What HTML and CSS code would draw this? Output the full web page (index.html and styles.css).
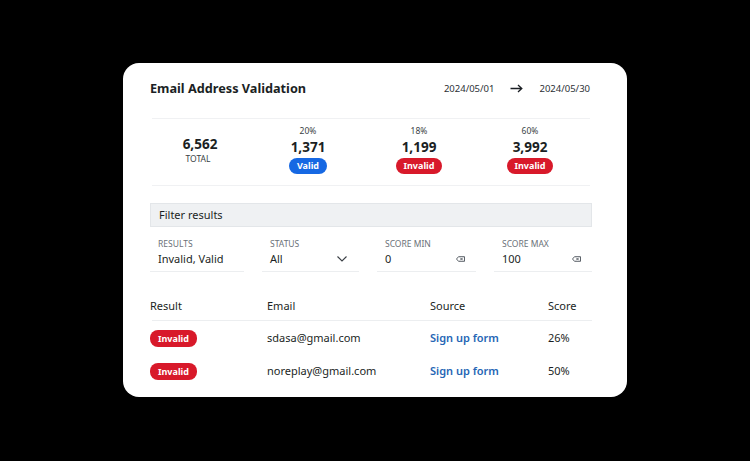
FILE: index.html
```html
<!DOCTYPE html>
<html lang="en">
<head>
  <meta charset="UTF-8">
  <meta name="viewport" content="width=device-width, initial-scale=1.0">
  <title>Email Address Validation</title>
  <link rel="stylesheet" href="styles.css">
</head>
<body>
  <div class="card">
    <header>
      <h1>Email Address Validation</h1>
      <div class="date-range">
        <span>2024/05/01</span>
        <svg class="arrow" width="13" height="9" viewBox="0 0 13 9"><path d="M0.5 4.5h11M8 1l3.8 3.5L8 8" fill="none" stroke="#1b1f24" stroke-width="1.3"/></svg>
        <span>2024/05/30</span>
      </div>
    </header>

    <div class="stats">
      <div class="stat total">
        <div class="stat-value">6,562</div>
        <div class="stat-label">TOTAL</div>
      </div>
      <div class="stat">
        <div class="stat-pct">20%</div>
        <div class="stat-value">1,371</div>
        <span class="badge valid">Valid</span>
      </div>
      <div class="stat">
        <div class="stat-pct">18%</div>
        <div class="stat-value">1,199</div>
        <span class="badge invalid">Invalid</span>
      </div>
      <div class="stat">
        <div class="stat-pct">60%</div>
        <div class="stat-value">3,992</div>
        <span class="badge invalid">Invalid</span>
      </div>
    </div>

    <div class="filter-bar">Filter results</div>
    <div class="filters">
      <div class="field">
        <label>RESULTS</label>
        <div class="field-value">Invalid, Valid</div>
      </div>
      <div class="field">
        <label>STATUS</label>
        <div class="field-value">All
          <svg class="chevron" width="10" height="6" viewBox="0 0 10 6"><path d="M0.5 0.5L5 5l4.5-4.5" fill="none" stroke="#3a3f45" stroke-width="1.1"/></svg>
        </div>
      </div>
      <div class="field">
        <label>SCORE MIN</label>
        <div class="field-value">0
          <svg class="clear" width="9" height="6" viewBox="0 0 9 6"><path d="M0.5 3L2.5 0.7h6v4.6h-6z" fill="none" stroke="#4a5058" stroke-width="0.9"/><path d="M4.3 1.8l2.4 2.4M6.7 1.8L4.3 4.2" stroke="#4a5058" stroke-width="0.9"/></svg>
        </div>
      </div>
      <div class="field">
        <label>SCORE MAX</label>
        <div class="field-value">100
          <svg class="clear" width="9" height="6" viewBox="0 0 9 6"><path d="M0.5 3L2.5 0.7h6v4.6h-6z" fill="none" stroke="#4a5058" stroke-width="0.9"/><path d="M4.3 1.8l2.4 2.4M6.7 1.8L4.3 4.2" stroke="#4a5058" stroke-width="0.9"/></svg>
        </div>
      </div>
    </div>

    <div class="results">
      <div class="row head">
        <div>Result</div>
        <div>Email</div>
        <div>Source</div>
        <div>Score</div>
      </div>
      <div class="row">
        <div><span class="badge invalid">Invalid</span></div>
        <div>sdasa@gmail.com</div>
        <div><a href="#">Sign up form</a></div>
        <div>26%</div>
      </div>
      <div class="row">
        <div><span class="badge invalid">Invalid</span></div>
        <div>noreplay@gmail.com</div>
        <div><a href="#">Sign up form</a></div>
        <div>50%</div>
      </div>
    </div>
  </div>
</body>
</html>
```

FILE: styles.css
```css
body {
  font-family: "Noto Sans", "Open Sans", sans-serif;
  color: #1b1f24;
  background: #000;
  margin: 0;
  padding: 63px 0 0 123px;
}
.card {
  width: 504px;
  height: 334px;
  box-sizing: border-box;
  background: #fff;
  border-radius: 16px;
  padding: 15px 35px 0 27px;
}
header {
  display: flex;
  justify-content: space-between;
  align-items: center;
  height: 20px;
}
h1 {
  margin: 0;
  font-size: 12.7px;
  font-weight: 700;
}
.date-range {
  display: flex;
  align-items: center;
  gap: 11px;
  font-size: 9.5px;
  color: #2c3136;
  padding-right: 2px;
}
.arrow {
  margin: 0 5px;
}
.stats {
  display: grid;
  grid-template-columns: 96px 120px 102px 1fr;
  margin: 20px 2px 0 2px;
  height: 66px;
  border-top: 1px solid #f0f1f3;
  border-bottom: 1px solid #f0f1f3;
}
.stat {
  display: flex;
  flex-direction: column;
  align-items: center;
  padding-top: 6px;
}
.stat.total {
  padding-top: 15px;
}
.stat-pct {
  font-size: 8.5px;
  color: #3a3f45;
  line-height: 12px;
}
.stat-value {
  font-size: 13.5px;
  font-weight: 700;
  line-height: 18px;
  margin-top: 1px;
}
.stat-label {
  font-size: 8.5px;
  color: #3a3f45;
  line-height: 12px;
  margin-right: 4px;
}
.badge {
  display: inline-block;
  height: 16px;
  line-height: 16px;
  padding: 0 8px;
  border-radius: 8px;
  font-size: 9px;
  font-weight: 700;
  color: #fff;
  margin-top: 2px;
}
.badge.valid {
  background: #1668e3;
}
.badge.invalid {
  background: #d8192a;
}
.filter-bar {
  margin-top: 17px;
  height: 24px;
  line-height: 22px;
  box-sizing: border-box;
  background: #eff1f3;
  border: 1px solid #e3e6e9;
  padding-left: 8px;
  font-size: 11px;
}
.filters {
  display: grid;
  grid-template-columns: 94px 97px 99px 1fr;
  gap: 18px;
  margin-top: 11px;
}
.field {
  border-bottom: 1px solid #eceef0;
  padding: 0 0 4px 8px;
}
.field label {
  display: block;
  font-size: 8.5px;
  color: #6b7178;
  line-height: 12px;
}
.field-value {
  display: flex;
  justify-content: space-between;
  align-items: center;
  font-size: 11px;
  line-height: 16px;
  margin-top: 1px;
  padding-right: 10px;
}
.chevron {
  margin-right: 2px;
}
.clear {
  margin-right: 1px;
}
.results {
  margin-top: 26px;
}
.row {
  display: grid;
  grid-template-columns: 117px 163px 118px 1fr;
  align-items: center;
  height: 33px;
  font-size: 11px;
}
.row.head {
  grid-template-columns: 115px 163px 118px 1fr;
  height: 22px;
  align-items: start;
  border-bottom: 1px solid #eceef0;
  margin-left: 2px;
}
.row.head div:first-child {
  margin-left: -2px;
}
.row .badge {
  height: 17px;
  line-height: 17px;
  margin-top: 1px;
}
a {
  color: #2566b5;
  font-weight: 600;
  text-decoration: none;
}
```
